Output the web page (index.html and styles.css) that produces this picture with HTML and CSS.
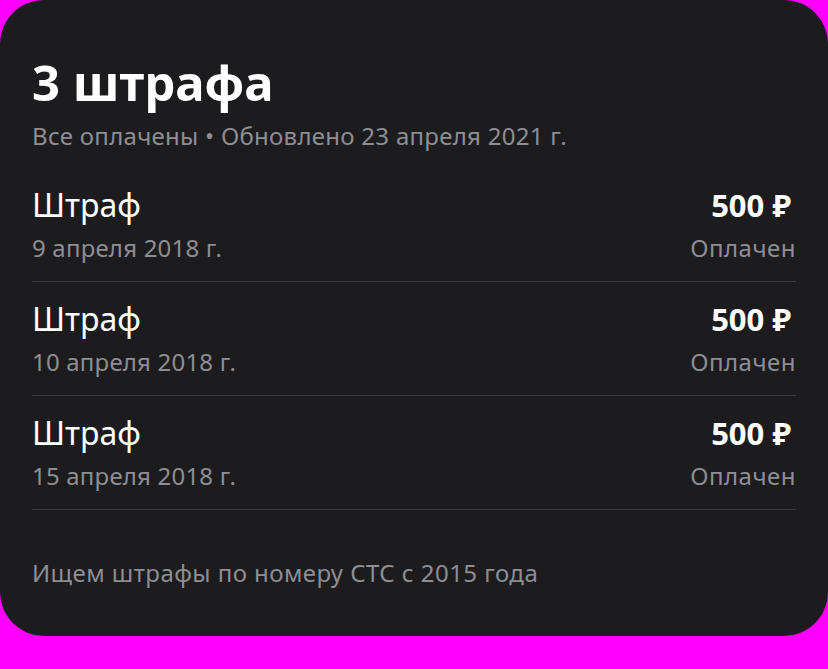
FILE: index.html
```html
<!DOCTYPE html>
<html lang="ru">
<head>
<meta charset="utf-8">
<link rel="stylesheet" href="styles.css">
</head>
<body>
<div class="card">
  <h1 class="title">3 штрафа</h1>
  <div class="subtitle">Все оплачены • Обновлено 23 апреля 2021 г.</div>
  <div class="list">
    <div class="row">
      <div class="col">
        <div class="name">Штраф</div>
        <div class="date">9 апреля 2018 г.</div>
      </div>
      <div class="col right">
        <div class="amount">500 ₽</div>
        <div class="status">Оплачен</div>
      </div>
    </div>
    <div class="row">
      <div class="col">
        <div class="name">Штраф</div>
        <div class="date">10 апреля 2018 г.</div>
      </div>
      <div class="col right">
        <div class="amount">500 ₽</div>
        <div class="status">Оплачен</div>
      </div>
    </div>
    <div class="row">
      <div class="col">
        <div class="name">Штраф</div>
        <div class="date">15 апреля 2018 г.</div>
      </div>
      <div class="col right">
        <div class="amount">500 ₽</div>
        <div class="status">Оплачен</div>
      </div>
    </div>
  </div>
  <div class="footer">Ищем штрафы по номеру СТС с 2015 года</div>
</div>
</body>
</html>
```
FILE: styles.css
```css
html, body {
  margin: 0;
  padding: 0;
  background: #ff00ff;
}
body {
  font-family: "Noto Sans", "Liberation Sans", sans-serif;
  width: 828px;
  height: 669px;
}
.card {
  background: #1c1c1e;
  border-radius: 44px;
  height: 636px;
  box-sizing: border-box;
  padding: 54px 32px 0 32px;
}
.title {
  margin: 0;
  font-size: 49px;
  line-height: 56px;
  font-weight: 700;
  color: #ffffff;
}
.subtitle {
  margin-top: 11px;
  font-size: 24px;
  line-height: 30px;
  letter-spacing: 0.28px;
  color: #8e8e93;
}
.list {
  margin-top: 17px;
}
.row {
  display: flex;
  justify-content: space-between;
  border-bottom: 1px solid #3a3a3c;
  padding: 18px 0;
}
.name {
  font-size: 32px;
  line-height: 38px;
  color: #ffffff;
}
.amount {
  font-size: 31px;
  line-height: 38px;
  font-weight: 700;
  color: #ffffff;
  padding-right: 5px;
}
.date, .status {
  margin-top: 9px;
  font-size: 24px;
  line-height: 30px;
  color: #8e8e93;
}
.date {
  letter-spacing: 0.2px;
}
.status {
  letter-spacing: 0.5px;
}
.right {
  text-align: right;
}
.footer {
  margin-top: 48px;
  font-size: 24px;
  line-height: 30px;
  letter-spacing: 0.45px;
  color: #8e8e93;
}
```
